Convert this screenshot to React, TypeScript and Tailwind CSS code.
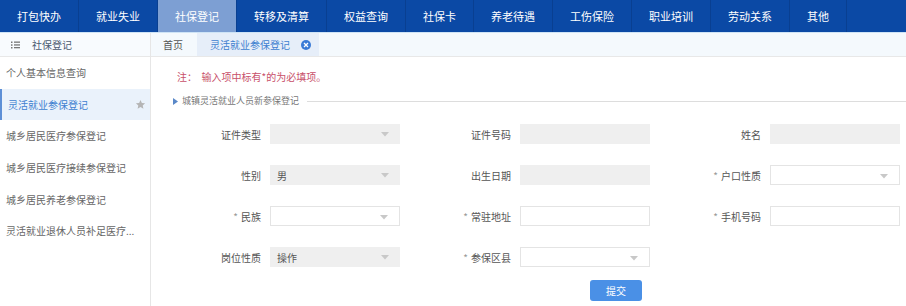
import React from "react";

const navItems = ["打包快办", "就业失业", "社保登记", "转移及清算", "权益查询", "社保卡", "养老待遇", "工伤保险", "职业培训", "劳动关系", "其他"];
const sideItems = ["个人基本信息查询", "灵活就业参保登记", "城乡居民医疗参保登记", "城乡居民医疗接续参保登记", "城乡居民养老参保登记", "灵活就业退休人员补足医疗..."];

type Field = { label: string; req?: boolean; kind: "select" | "input"; disabled?: boolean; value?: string } | null;

const fields: Field[] = [
  { label: "证件类型", kind: "select", disabled: true },
  { label: "证件号码", kind: "input", disabled: true },
  { label: "姓名", kind: "input", disabled: true },
  { label: "性别", kind: "select", disabled: true, value: "男" },
  { label: "出生日期", kind: "input", disabled: true },
  { label: "户口性质", req: true, kind: "select" },
  { label: "民族", req: true, kind: "select" },
  { label: "常驻地址", req: true, kind: "input" },
  { label: "手机号码", req: true, kind: "input" },
  { label: "岗位性质", kind: "select", disabled: true, value: "操作" },
  { label: "参保区县", req: true, kind: "select" },
  null,
];

function Arrow() {
  return (
    <svg width="8" height="5" viewBox="0 0 8 5" className="absolute right-[11px] top-[8px]">
      <path d="M0 0 L8 0 L4 4.5 Z" fill="#c8c8c8" />
    </svg>
  );
}

export default function App() {
  return (
    <div className="w-[906px] h-[306px] overflow-hidden bg-white text-[#555]" style={{ fontFamily: '"Noto Sans CJK SC", "Noto Sans", sans-serif' }}>
      {/* Top nav */}
      <div className="flex h-[32px] bg-[#0b49a5]">
        {navItems.map((n, i) => (
          <div
            key={n}
            className={`flex items-center px-[17px] text-[11px] text-white border-r border-[#093f91] ${i === 2 ? "bg-[#7d9fd3]" : ""}`}
          >
            {n}
          </div>
        ))}
      </div>
      <div className="h-[1px] bg-[#cfe4f6]" />
      <div className="flex">
        {/* Sidebar */}
        <div className="w-[151px] h-[273px] border-r border-[#e6e6e6] shrink-0">
          <div className="flex items-center h-[24px] border-b border-[#e8e8e8] bg-[#f8fbfe] pl-[11px]">
            <svg width="9" height="8" viewBox="0 0 9 8" className="mr-[12px]">
              <rect x="0" y="0.5" width="1.5" height="1.5" fill="#777" />
              <rect x="0" y="3.3" width="1.5" height="1.5" fill="#777" />
              <rect x="0" y="6" width="1.5" height="1.5" fill="#777" />
              <rect x="3" y="0.5" width="6" height="1.3" fill="#777" />
              <rect x="3" y="3.3" width="6" height="1.3" fill="#777" />
              <rect x="3" y="6" width="6" height="1.3" fill="#777" />
            </svg>
            <span className="text-[10px] text-[#4a5a70]">社保登记</span>
          </div>
          {sideItems.map((s, i) => (
            <div
              key={s}
              className={`flex items-center h-[31.6px] text-[10px] pl-[6px] pr-[4px] ${i === 1 ? "bg-[#eaf2fb] text-[#3d7fd0] border-l-2 border-[#5d8fd6] pl-[4px]" : "text-[#666]"}`}
            >
              <span className="flex-1 whitespace-nowrap">{s}</span>
              {i === 1 && (
                <svg width="11" height="11" viewBox="0 0 24 24">
                  <path d="M12 2l3 6.5 7 .8-5.2 4.8 1.5 7L12 17.6 5.7 21.1l1.5-7L2 9.3l7-.8z" fill="#b5b5b5" />
                </svg>
              )}
            </div>
          ))}
        </div>
        {/* Main */}
        <div className="flex-1">
          <div className="flex items-stretch h-[24px] bg-[#f4f9fd] border-b border-[#e8e8e8]">
            <div className="flex items-center px-[12px] text-[10px] text-[#555]">首页</div>
            <div className="flex items-center ml-[2px] pl-[13px] pr-[8px] bg-[#e6eef9] text-[10px] text-[#3d7fd0]">
              灵活就业参保登记
              <span className="ml-[11px] w-[10px] h-[10px] rounded-full bg-[#3a7bd6] flex items-center justify-center">
                <svg width="6" height="6" viewBox="0 0 6 6">
                  <path d="M1 1L5 5M5 1L1 5" stroke="white" strokeWidth="1.3" />
                </svg>
              </span>
            </div>
          </div>
          <div className="pl-[26px] pt-[12px] text-[10px] text-[#c8506a] h-[35px]">注：&nbsp;&nbsp;输入项中标有*的为必填项。</div>
          <div className="flex items-center pl-[22px] h-[18px]">
            <svg width="5" height="7" viewBox="0 0 5 7" className="mr-[4px]">
              <path d="M0 0L5 3.5L0 7Z" fill="#5a88c8" />
            </svg>
            <span className="text-[9px] text-[#777]">城镇灵活就业人员新参保登记</span>
            <div className="flex-1 h-[1px] bg-[#ddd] ml-[8px]" />
          </div>
          <div className="grid grid-cols-[250px_250px_250px] gap-y-[21px] mt-[14px]">
            {fields.map((f, i) =>
              f ? (
                <div key={i} className="flex items-center">
                  <div className="w-[110px] text-right text-[10px] text-[#555]">
                    {f.req && <span className="text-[#999] mr-[3px]">*</span>}
                    {f.label}
                  </div>
                  <div
                    className={`relative ml-[9px] w-[130px] h-[20px] flex items-center pl-[7px] text-[10px] text-[#555] ${f.disabled ? "bg-[#efefef]" : "bg-white border border-[#e4e4e4]"}`}
                  >
                    {f.value}
                    {f.kind === "select" && <Arrow />}
                  </div>
                </div>
              ) : (
                <div key={i} />
              )
            )}
          </div>
          <div className="pl-[439px] mt-[9px]">
            <button className="w-[52px] h-[21px] rounded-[3px] bg-[#4a90e6] text-white text-[10px]">提交</button>
          </div>
        </div>
      </div>
    </div>
  );
}
